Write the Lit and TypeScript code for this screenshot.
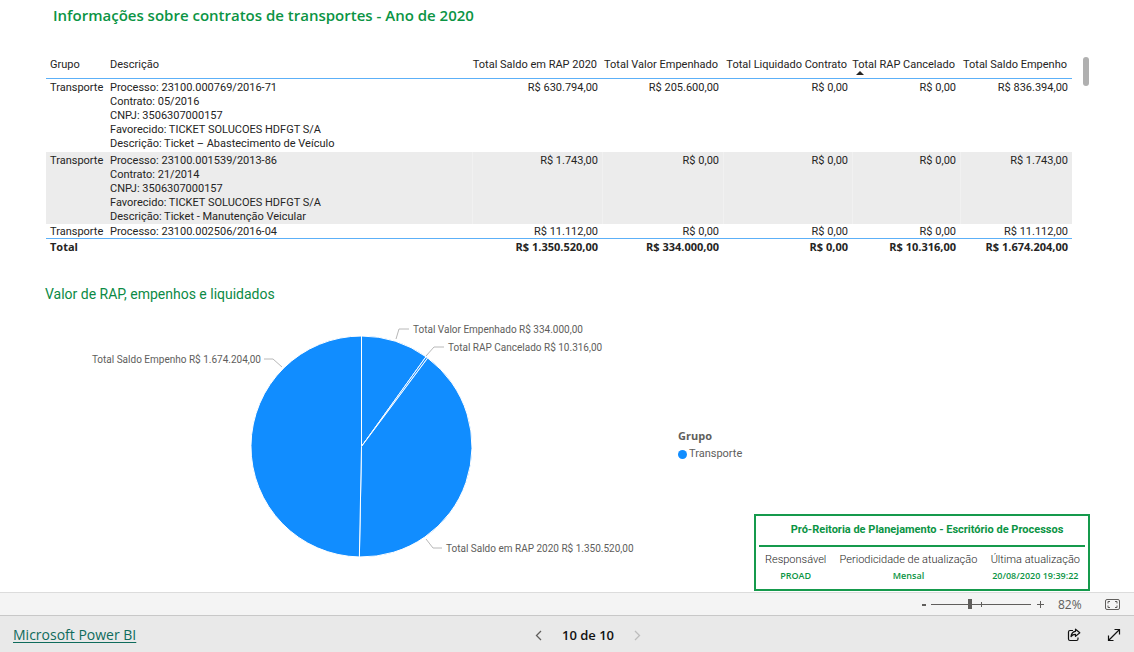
import { LitElement, html, svg, css } from "lit";
import { customElement, property, state } from "lit/decorators.js";

interface Contract {
  group: string;
  description: string[];
  values: string[];
}

const COLUMNS = [
  "Total Saldo em RAP 2020",
  "Total Valor Empenhado",
  "Total Liquidado Contrato",
  "Total RAP Cancelado",
  "Total Saldo Empenho",
];

const CONTRACTS: Contract[] = [
  {
    group: "Transporte",
    description: [
      "Processo: 23100.000769/2016-71",
      "Contrato: 05/2016",
      "CNPJ: 3506307000157",
      "Favorecido: TICKET SOLUCOES HDFGT S/A",
      "Descrição: Ticket – Abastecimento de Veículo",
    ],
    values: ["R$ 630.794,00", "R$ 205.600,00", "R$ 0,00", "R$ 0,00", "R$ 836.394,00"],
  },
  {
    group: "Transporte",
    description: [
      "Processo: 23100.001539/2013-86",
      "Contrato: 21/2014",
      "CNPJ: 3506307000157",
      "Favorecido: TICKET SOLUCOES HDFGT S/A",
      "Descrição: Ticket - Manutenção Veicular",
    ],
    values: ["R$ 1.743,00", "R$ 0,00", "R$ 0,00", "R$ 0,00", "R$ 1.743,00"],
  },
  {
    group: "Transporte",
    description: ["Processo: 23100.002506/2016-04"],
    values: ["R$ 11.112,00", "R$ 0,00", "R$ 0,00", "R$ 0,00", "R$ 11.112,00"],
  },
];

const TOTALS = ["R$ 1.350.520,00", "R$ 334.000,00", "R$ 0,00", "R$ 10.316,00", "R$ 1.674.204,00"];

@customElement("contracts-table")
export class ContractsTable extends LitElement {
  static styles = css`
    :host {
      display: flex;
      align-items: flex-start;
      gap: 11px;
      padding-left: 1px;
    }
    table {
      flex: 1;
      width: 100%;
      min-width: 0;
      table-layout: fixed;
      border-collapse: separate;
      border-spacing: 0;
      font-family: Roboto, sans-serif;
      font-size: 11px;
      line-height: 14px;
      color: #252423;
    }
    th, td { box-sizing: border-box; }
    .group { width: 60px; }
    .rap { width: 130px; }
    .committed { width: 121px; }
    .settled { width: 129px; }
    .cancelled { width: 108px; }
    .balance { width: 112px; }
    th, td {
      padding: 2px 4px 0;
      text-align: left;
      vertical-align: top;
      font-weight: 400;
      white-space: nowrap;
    }
    th.num, td.num { text-align: right; }
    thead th {
      padding: 1px 4px 6px;
      border-bottom: 1px solid #5cb0f8;
    }
    thead th.num { padding-left: 0; padding-right: 5px; }
    tbody tr:first-child td { padding-bottom: 1px; }
    tbody tr:nth-child(even) { background: #ececec; }
    tbody tr:nth-child(even) td.num { border-left: 1px solid #f1f1f1; }
    tbody tr:last-child td {
      line-height: 12px;
      border-bottom: 1px solid #5cb0f8;
    }
    tfoot th, tfoot td {
      padding-top: 1px;
      font-family: "Open Sans", sans-serif;
      font-weight: 700;
    }
    .sorted { position: relative; }
    .sorted::after {
      content: "";
      position: absolute;
      left: 4px;
      bottom: 3px;
      border: 4px solid transparent;
      border-top: 0;
      border-bottom-color: #252423;
    }
    .thumb {
      flex: none;
      width: 6px;
      height: 29px;
      border-radius: 3px;
      background: #b0b0b0;
    }
  `;

  render() {
    return html`
      <table>
        <thead>
          <tr>
            <th scope="col" class="group">Grupo</th>
            <th scope="col">Descrição</th>
            <th scope="col" class="num rap">${COLUMNS[0]}</th>
            <th scope="col" class="num committed">${COLUMNS[1]}</th>
            <th scope="col" class="num settled">${COLUMNS[2]}</th>
            <th scope="col" class="num cancelled sorted" aria-sort="ascending">${COLUMNS[3]}</th>
            <th scope="col" class="num balance">${COLUMNS[4]}</th>
          </tr>
        </thead>
        <tbody>
          ${CONTRACTS.map(
            (r) => html`<tr>
              <td>${r.group}</td>
              <td>${r.description.map((d) => html`<div>${d}</div>`)}</td>
              ${r.values.map((v) => html`<td class="num">${v}</td>`)}
            </tr>`
          )}
        </tbody>
        <tfoot>
          <tr>
            <th scope="row">Total</th>
            <td></td>
            ${TOTALS.map((v) => html`<td class="num">${v}</td>`)}
          </tr>
        </tfoot>
      </table>
      <div class="thumb"></div>
    `;
  }
}

const SLICES = [
  { label: "Total Valor Empenhado R$ 334.000,00", value: 334000, line: "351,29 354,19 364,19", x: 368, y: 23, anchor: "start" },
  { label: "Total RAP Cancelado R$ 10.316,00", value: 10316, line: "381,46 389,37 399,37", x: 403, y: 41, anchor: "start" },
  { label: "Total Saldo em RAP 2020 R$ 1.350.520,00", value: 1350520, line: "381,229 388,238 397,238", x: 401, y: 242, anchor: "start" },
  { label: "Total Saldo Empenho R$ 1.674.204,00", value: 1674204, line: "237,57 228,49 219,49", x: 216, y: 53, anchor: "end" },
];

@customElement("pie-chart")
export class PieChart extends LitElement {
  static styles = css`
    :host { display: block; }
    svg { display: block; width: 600px; max-width: 100%; }
    .slice { fill: #118dff; stroke: #fff; stroke-width: 1; stroke-linejoin: round; }
    .leader { fill: none; stroke: #b8b8b8; stroke-width: 1; }
    text { font-family: Roboto, sans-serif; font-size: 10px; fill: #605e5c; }
  `;

  private slicePath(start: number, end: number) {
    const cx = 316.5, cy = 136.5, r = 110.5;
    const at = (t: number) => {
      const a = t * 2 * Math.PI;
      return `${(cx + r * Math.sin(a)).toFixed(2)} ${(cy - r * Math.cos(a)).toFixed(2)}`;
    };
    return `M${cx} ${cy}L${at(start)}A${r} ${r} 0 ${end - start > 0.5 ? 1 : 0} 1 ${at(end)}Z`;
  }

  render() {
    const total = SLICES.reduce((s, d) => s + d.value, 0);
    let acc = 0;
    return html`<svg viewBox="0 0 600 281" role="img" aria-label="Valor de RAP, empenhos e liquidados">
      ${SLICES.map((s) => {
        const start = acc / total;
        acc += s.value;
        return svg`<path class="slice" d=${this.slicePath(start, acc / total)} />`;
      })}
      ${SLICES.map(
        (s) => svg`<polyline class="leader" points=${s.line} />
          <text x=${s.x} y=${s.y} text-anchor=${s.anchor}>${s.label}</text>`
      )}
    </svg>`;
  }
}

@customElement("info-card")
export class InfoCard extends LitElement {
  @property() heading = "";
  static styles = css`
    :host {
      display: block;
      box-sizing: border-box;
      border: 2px solid #159a4c;
      padding: 0 3px 5px;
    }
    h2 {
      margin: 0;
      padding: 6px 0 7px 10px;
      font-family: Roboto, sans-serif;
      font-size: 11px;
      line-height: 16px;
      font-weight: 700;
      text-align: center;
      color: #0b9444;
      border-bottom: 2px solid #159a4c;
    }
    dl {
      display: flex;
      justify-content: space-between;
      margin: 0;
      padding: 5px 5px 0 6px;
      text-align: center;
    }
    dt {
      font-family: Roboto, sans-serif;
      font-size: 11px;
      line-height: 16px;
      font-weight: 300;
      color: #252423;
    }
    dd {
      margin: 0;
      font-size: 9px;
      line-height: 16px;
      font-weight: 600;
      color: #0b9444;
    }
  `;
  render() {
    return html`
      <h2>${this.heading}</h2>
      <dl>
        <div><dt>Responsável</dt><dd>PROAD</dd></div>
        <div><dt>Periodicidade de atualização</dt><dd>Mensal</dd></div>
        <div><dt>Última atualização</dt><dd>20/08/2020 19:39:22</dd></div>
      </dl>
    `;
  }
}

@customElement("app-root")
export class AppRoot extends LitElement {
  @state() private zoom = 39;

  static styles = css`
    :host {
      display: flex;
      flex-direction: column;
      min-height: 100vh;
      background: #fff;
      font-family: "Open Sans", "Noto Sans", sans-serif;
      color: #252423;
    }
    main { flex: 1; padding: 0 45px 1px; }
    h1 {
      margin: 0;
      padding: 4px 8px 31px;
      font-size: 15px;
      line-height: 22px;
      font-weight: 600;
      color: #0b9444;
    }
    h2 {
      margin: 0;
      padding: 30px 0 6px;
      font-size: 14px;
      line-height: 20px;
      font-weight: 400;
      font-family: Roboto, sans-serif;
      color: #0b8a45;
    }
    .visuals { display: flex; align-items: stretch; }
    .chart { flex: 1; min-width: 0; }
    aside {
      flex: 0 0 411px;
      display: flex;
      flex-direction: column;
      justify-content: space-between;
    }
    .legend {
      padding-top: 117px;
      font-family: Roboto, sans-serif;
      font-size: 11px;
      line-height: 18px;
      color: #605e5c;
    }
    .legend strong { display: block; font-family: "Open Sans", sans-serif; font-weight: 700; }
    .item { display: flex; align-items: center; gap: 2px; }
    .dot { width: 9px; height: 9px; border-radius: 50%; background: #118dff; }
    info-card { width: 336px; margin-right: -1px; align-self: flex-end; }

    button {
      display: grid;
      place-items: center;
      padding: 0;
      border: 0;
      background: none;
      font: inherit;
      color: #605e5c;
    }
    svg { display: block; fill: none; stroke: currentColor; }
    .zoombar {
      display: flex;
      align-items: center;
      justify-content: flex-end;
      height: 22px;
      padding-right: 14px;
      border-top: 1px solid #dcdcdc;
      border-bottom: 1px solid #c8c8c8;
      background: #f4f4f4;
      font-size: 12px;
      color: #605e5c;
    }
    .step { width: 10px; height: 16px; }
    .percent { width: 24px; margin: 0 23px 0 13px; }
    input {
      appearance: none;
      width: 100px;
      height: 10px;
      margin: 0 4px 0 2px;
      background:
        linear-gradient(#605e5c, #605e5c) 50% 50% / 1px 5px no-repeat,
        linear-gradient(#605e5c, #605e5c) 0 50% / 100% 1px no-repeat;
    }
    input::-webkit-slider-thumb {
      appearance: none;
      width: 4px;
      height: 10px;
      background: #605e5c;
    }
    footer {
      display: grid;
      grid-template-columns: 1fr auto 1fr;
      align-items: center;
      height: 36px;
      padding: 2px 13px 0;
      box-sizing: border-box;
      background: #e9e9e9;
      font-size: 14px;
      line-height: 20px;
    }
    a { justify-self: start; color: #0f6b5c; text-underline-offset: 2px; }
    .pager {
      display: flex;
      align-items: center;
      gap: 20px;
      margin-left: 42px;
      font-size: 13px;
      font-weight: 600;
      color: #111;
    }
    .pager .next { color: #bdbdbd; }
    .actions { display: flex; justify-content: flex-end; gap: 26px; }
    .actions button { color: #111; }
  `;

  render() {
    return html`
      <main>
        <h1>Informações sobre contratos de transportes - Ano de 2020</h1>
        <contracts-table></contracts-table>
        <h2>Valor de RAP, empenhos e liquidados</h2>
        <div class="visuals">
          <pie-chart class="chart"></pie-chart>
          <aside>
            <div class="legend">
              <strong>Grupo</strong>
              <div class="item"><span class="dot"></span>Transporte</div>
            </div>
            <info-card heading="Pró-Reitoria de Planejamento - Escritório de Processos"></info-card>
          </aside>
        </div>
      </main>
      <div class="zoombar">
        <button class="step" aria-label="Diminuir zoom">
          <svg width="10" height="9"><path d="M3 5H7" stroke-width="2" /></svg>
        </button>
        <input type="range" min="0" max="100" aria-label="Zoom" .value=${String(this.zoom)}
          @input=${(e: Event) => (this.zoom = Number((e.target as HTMLInputElement).value))} />
        <button class="step" aria-label="Aumentar zoom">
          <svg width="9" height="9"><path d="M1 4.5H8M4.5 1V8" /></svg>
        </button>
        <span class="percent">82%</span>
        <button aria-label="Ajustar à página">
          <svg width="15" height="11">
            <rect x="0.5" y="0.5" width="14" height="10" rx="1.5" />
            <path d="M5 2.5H3V4.5M10 2.5H12V4.5M5 8.5H3V6.5M10 8.5H12V6.5" />
          </svg>
        </button>
      </div>
      <footer>
        <a href="#">Microsoft Power BI</a>
        <div class="pager">
          <button aria-label="Página anterior">
            <svg width="7" height="11"><path d="M6 1L1.500 5.500L6 10" stroke-width="1.300" /></svg>
          </button>
          <span>10 de 10</span>
          <button class="next" aria-label="Próxima página">
            <svg width="7" height="11"><path d="M1 1L5.500 5.500L1 10" stroke-width="1.300" /></svg>
          </button>
        </div>
        <div class="actions">
          <button aria-label="Compartilhar">
            <svg width="14" height="14" stroke-width="1.200">
              <path d="M6 2.500H3Q1.500 2.500 1.500 4V11Q1.500 12.500 3 12.500H9.500Q11 12.500 11 11V9.500" />
              <path d="M8.500 1.200L12.800 4.800L8.500 8.400V6.400Q5.800 6.200 4 8.600Q4.500 3.800 8.500 3.300Z" stroke-linejoin="round" />
            </svg>
          </button>
          <button aria-label="Tela inteira">
            <svg width="14" height="14" stroke-width="1.200">
              <path d="M1.500 12.500L12.500 1.500M7.500 1.500H12.500V6.500M1.500 7.500V12.500H6.500" />
            </svg>
          </button>
        </div>
      </footer>
    `;
  }
}
